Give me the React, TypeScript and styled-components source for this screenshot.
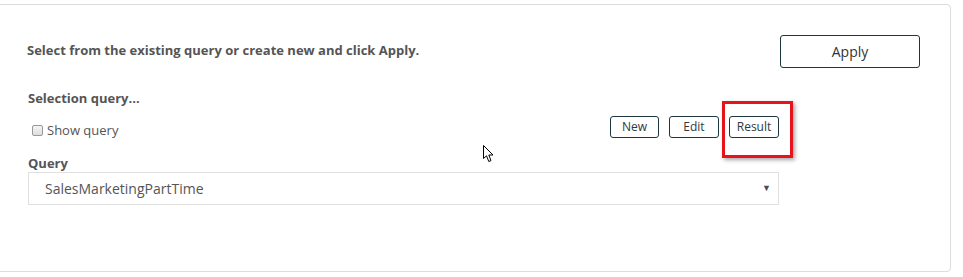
import React from "react";
import styled, { createGlobalStyle } from "styled-components";

const Global = createGlobalStyle`
  html, body { margin: 0; padding: 0; background: #fff; }
  body { font-family: "Open Sans", "Liberation Sans", sans-serif; color: #555; overflow: hidden; }
  * { box-sizing: border-box; }
`;

const Page = styled.div`
  width: 963px;
  height: 277px;
  padding-top: 4px;
  position: relative;
  overflow: hidden;
`;

const Panel = styled.section`
  margin-left: -10px;
  width: 961px;
  height: 268px;
  border: 1px solid #dcdcdc;
  border-radius: 4px;
  padding: 30px 30px 0 36px;
`;

const Header = styled.div`
  display: flex;
  align-items: center;
  justify-content: space-between;
  height: 33px;
`;

const Intro = styled.h2`
  margin: 0;
  font-size: 13px;
  font-weight: 700;
  color: #555;
  line-height: 18px;
  padding-bottom: 3px;
`;

const ApplyButton = styled.button`
  width: 140px;
  height: 33px;
  background: #fff;
  border: 1px solid #1e3640;
  border-radius: 3px;
  font-family: inherit;
  font-size: 14px;
  color: #333;
  padding: 0;
`;

const Section = styled.div`
  width: 751px;
  margin-left: 1px;
`;

const Label = styled.div<{ $top: number }>`
  font-size: 13px;
  font-weight: 700;
  line-height: 18px;
  color: #555;
  margin-top: ${(p) => p.$top}px;
`;

const Row = styled.div`
  display: flex;
  justify-content: space-between;
  align-items: flex-start;
  margin-top: 9px;
  height: 22px;
`;

const CheckLabel = styled.label`
  display: flex;
  align-items: center;
  gap: 4px;
  margin-top: 5px;
  margin-left: 4px;
  font-size: 13px;
  line-height: 18px;
  color: #555;
`;

const Box = styled.span`
  width: 11px;
  height: 11px;
  border: 1px solid #9a9a9a;
  border-radius: 2px;
  background: linear-gradient(#f4f4f4, #dedede);
`;

const Buttons = styled.div`
  display: flex;
  align-items: flex-start;
  gap: 10px;
`;

const SmallButton = styled.button<{ $w: number }>`
  display: block;
  width: ${(p) => p.$w}px;
  height: 22px;
  background: #fff;
  border: 1px solid #1e3640;
  border-radius: 3px;
  font-family: inherit;
  font-size: 12px;
  color: #2e3a40;
  padding: 0;
  line-height: 20px;
`;

const Highlight = styled.div`
  position: relative;
  display: flex;
`;

const RedFrame = styled.span`
  position: absolute;
  left: -7px;
  top: -15px;
  width: 71px;
  height: 57px;
  border: 3px solid #e8121a;
  box-shadow: 2px 2px 4px rgba(0, 0, 0, 0.35);
  pointer-events: none;
`;

const Select = styled.div`
  height: 33px;
  border: 1px solid #e0e0e0;
  display: flex;
  align-items: center;
  justify-content: space-between;
  padding: 0 7px 0 16px;
  font-size: 14px;
  color: #555;
`;

const Arrow = styled.span`
  font-size: 9px;
  color: #4a4f55;
  margin-top: -2px;
`;

const Cursor = styled.svg`
  position: absolute;
  left: 483px;
  top: 145px;
`;

export default function App() {
  return (
    <Page>
      <Global />
      <Panel>
        <Header>
          <Intro>Select from the existing query or create new and click Apply.</Intro>
          <ApplyButton>Apply</ApplyButton>
        </Header>
        <Section>
          <Label $top={21}>Selection query...</Label>
          <Row>
            <CheckLabel>
              <Box />
              Show query
            </CheckLabel>
            <Buttons>
              <SmallButton $w={49}>New</SmallButton>
              <SmallButton $w={50}>Edit</SmallButton>
              <Highlight>
                <SmallButton $w={50}>Result</SmallButton>
                <RedFrame />
              </Highlight>
            </Buttons>
          </Row>
          <Label $top={16}>Query</Label>
          <Select>
            <span>SalesMarketingPartTime</span>
            <Arrow>▼</Arrow>
          </Select>
        </Section>
      </Panel>
      <Cursor width="12" height="18" viewBox="0 0 12 18">
        <path d="M0.5 0.5 L0.5 13.5 L3.5 10.8 L5.8 16.5 L8 15.6 L5.8 10 L10 10 Z" fill="#fff" stroke="#000" strokeWidth="1" strokeLinejoin="miter" />
      </Cursor>
    </Page>
  );
}
